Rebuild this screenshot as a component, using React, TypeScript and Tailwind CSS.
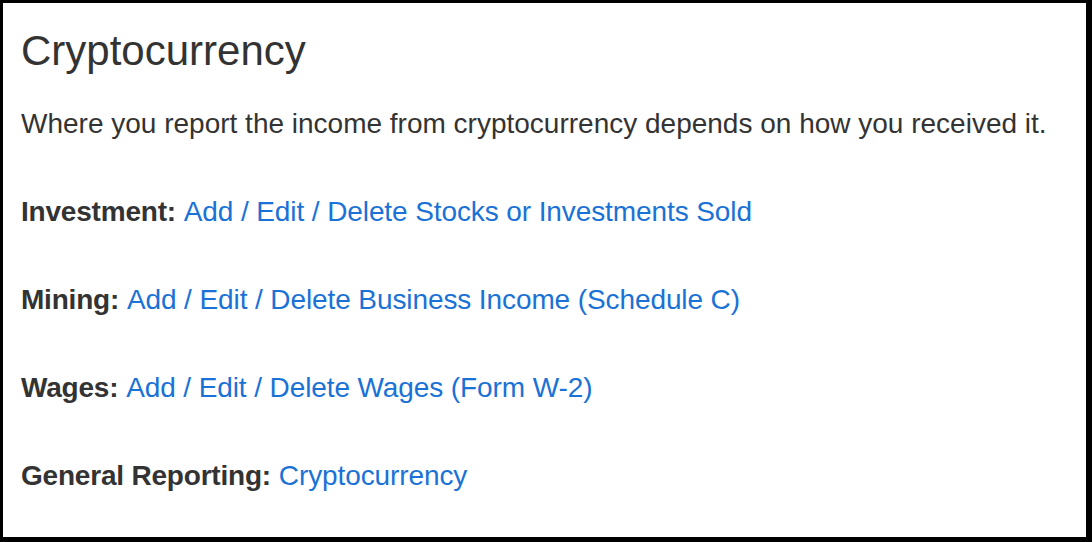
import React from "react";

const Row = ({ label, link }: { label: string; link: string }) => (
  <p className="text-[28px] leading-[30px] text-[#333333] whitespace-nowrap">
    <span className="font-bold tracking-[-0.2px]">{label}</span>{" "}
    <a className="text-[#1a72d6] tracking-[-0.1px]">{link}</a>
  </p>
);

export default function App() {
  return (
    <div
      className="w-[1092px] h-[542px] bg-black pt-[3px] pl-[3px] pr-[6px] pb-[5px]"
      style={{ fontFamily: '"Liberation Sans", Arial, Helvetica, sans-serif' }}
    >
      <div className="w-full h-full bg-white pl-[18px] pt-[24px] flex flex-col">
        <h1 className="text-[42px] leading-[48px] text-[#333333] font-normal">
          Cryptocurrency
        </h1>
        <p className="mt-[34px] text-[28px] leading-[30px] text-[#333333] whitespace-nowrap">
          Where you report the income from cryptocurrency depends on how you received it.
        </p>
        <div className="mt-[58px] flex flex-col gap-[58px]">
          <Row label="Investment:" link="Add / Edit / Delete Stocks or Investments Sold" />
          <Row label="Mining:" link="Add / Edit / Delete Business Income (Schedule C)" />
          <Row label="Wages:" link="Add / Edit / Delete Wages (Form W-2)" />
          <Row label="General Reporting:" link="Cryptocurrency" />
        </div>
      </div>
    </div>
  );
}
